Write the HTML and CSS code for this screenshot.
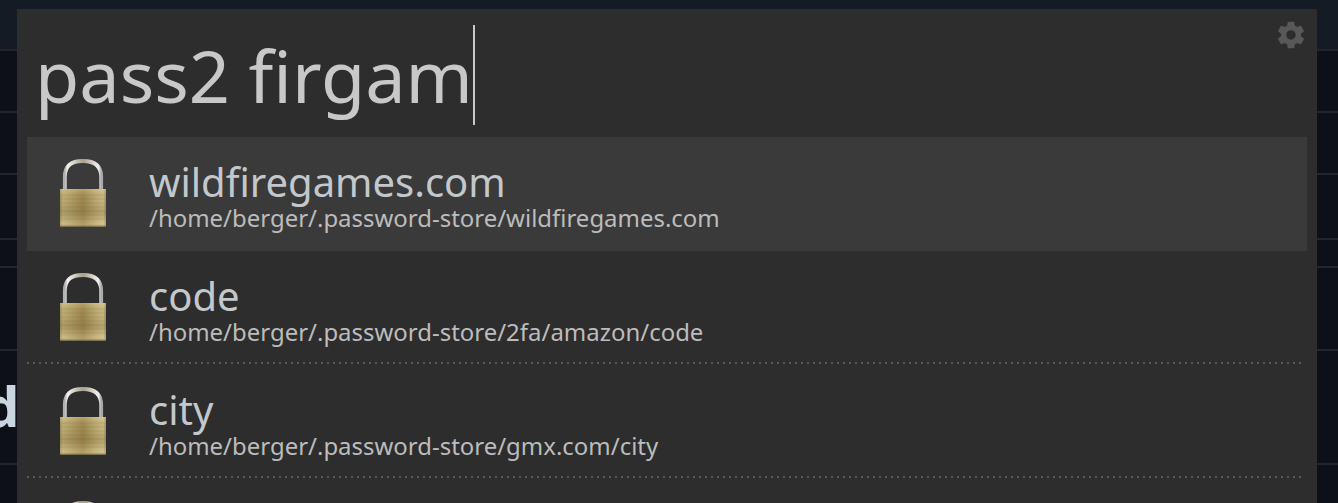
FILE: index.html
```html
<!DOCTYPE html>
<html lang="en">
  <head>
    <meta charset="UTF-8" />
    <meta name="viewport" content="width=device-width, initial-scale=1.0" />
    <title>Launcher</title>
    <link rel="stylesheet" href="styles.css">
  </head>
  <body>
    <svg class="defs" width="0" height="0" aria-hidden="true">
      <defs>
        <linearGradient id="brass" x1="0" y1="0" x2="1" y2="0">
          <stop offset="0" stop-color="#9a8c5e" />
          <stop offset="0.06" stop-color="#c0b07c" />
          <stop offset="0.28" stop-color="#ae9b63" />
          <stop offset="0.5" stop-color="#9c864e" />
          <stop offset="0.78" stop-color="#bcab76" />
          <stop offset="0.94" stop-color="#cbbb88" />
          <stop offset="1" stop-color="#9a8c60" />
        </linearGradient>
        <linearGradient id="brass-shade" x1="0" y1="0" x2="0" y2="1">
          <stop offset="0" stop-color="#f4e6b0" stop-opacity="0.3" />
          <stop offset="0.3" stop-color="#8a7434" stop-opacity="0.05" />
          <stop offset="0.6" stop-color="#6b5a24" stop-opacity="0.25" />
          <stop offset="0.92" stop-color="#efe0ac" stop-opacity="0.25" />
          <stop offset="1" stop-color="#4a4230" stop-opacity="0.8" />
        </linearGradient>
        <linearGradient id="shackle" x1="0" y1="0" x2="1" y2="0">
          <stop offset="0" stop-color="#b0b0ae" />
          <stop offset="0.08" stop-color="#f4f4f2" />
          <stop offset="0.5" stop-color="#a89f8c" />
          <stop offset="0.92" stop-color="#f2f2f0" />
          <stop offset="1" stop-color="#a8a8a8" />
        </linearGradient>
        <symbol id="padlock" viewBox="0 0 48 68">
          <path d="M5.8 31V18C5.8 6 13 2 24 2S42.2 6 42.2 18v13" fill="none" stroke="url(#shackle)" stroke-width="3.8" />
          <rect x="1" y="30" width="46" height="38" fill="url(#brass)" />
          <rect x="1" y="30" width="46" height="38" fill="url(#brass-shade)" />
          <path d="M2 36h44M2 40h44M2 44h44M2 48h44M2 52h44M2 56h44M2 60h44" stroke="#7f6c36" stroke-opacity="0.18" />
        </symbol>
      </defs>
    </svg>

    <div class="backdrop">
      <div class="row row-head"></div>
      <div class="row row-a"></div>
      <div class="row row-a"></div>
      <div class="row row-b"></div>
      <div class="row row-c"></div>
      <div class="row row-d"></div>
      <div class="row row-e"><h2>d</h2></div>
    </div>

    <div class="launcher">
      <div class="query">
        <span class="query-text">pass2 firgam</span><span class="caret"></span>
      </div>
      <svg class="gear" viewBox="0 0 24 24" aria-hidden="true">
        <path d="M19.43 12.98c.04-.32.07-.64.07-.98s-.03-.66-.07-.98l2.11-1.65c.19-.15.24-.42.12-.64l-2-3.46c-.12-.22-.39-.3-.61-.22l-2.49 1c-.52-.4-1.08-.73-1.69-.98l-.38-2.65C14.46 2.18 14.25 2 14 2h-4c-.25 0-.46.18-.49.42l-.38 2.65c-.61.25-1.17.59-1.69.98l-2.49-1c-.23-.09-.49 0-.61.22l-2 3.46c-.13.22-.07.49.12.64l2.11 1.65c-.04.32-.07.65-.07.98s.03.66.07.98l-2.11 1.65c-.19.15-.24.42-.12.64l2 3.46c.12.22.39.3.61.22l2.49-1c.52.4 1.08.73 1.69.98l.38 2.65c.03.24.24.42.49.42h4c.25 0 .46-.18.49-.42l.38-2.65c.61-.25 1.17-.59 1.69-.98l2.49 1c.23.09.49 0 .61-.22l2-3.46c.12-.22.07-.49-.12-.64l-2.11-1.65zM12 15.5c-1.93 0-3.5-1.57-3.5-3.5s1.57-3.5 3.5-3.5 3.5 1.57 3.5 3.5-1.57 3.5-3.5 3.5z" />
      </svg>
      <ul class="results">
        <li class="result selected">
          <svg class="result-icon"><use href="#padlock" /></svg>
          <div class="result-text">
            <div class="result-name">wildfiregames.com</div>
            <div class="result-path">/home/berger/.password-store/wildfiregames.com</div>
          </div>
        </li>
        <li class="result">
          <svg class="result-icon"><use href="#padlock" /></svg>
          <div class="result-text">
            <div class="result-name">code</div>
            <div class="result-path">/home/berger/.password-store/2fa/amazon/code</div>
          </div>
        </li>
        <li class="result">
          <svg class="result-icon"><use href="#padlock" /></svg>
          <div class="result-text">
            <div class="result-name">city</div>
            <div class="result-path">/home/berger/.password-store/gmx.com/city</div>
          </div>
        </li>
        <li class="result">
          <svg class="result-icon"><use href="#padlock" /></svg>
        </li>
      </ul>
    </div>
  </body>
</html>
```

FILE: styles.css
```css
* {
  margin: 0;
  padding: 0;
  box-sizing: border-box;
}

html,
body {
  height: 100%;
  overflow: hidden;
}

body {
  font-family: "Noto Sans", sans-serif;
  background: #0d1117;
  position: relative;
}

.defs {
  position: absolute;
}

.row {
  border-bottom: 2px solid #21262d;
  overflow: hidden;
}

.row-head {
  height: 51px;
  background: #151b25;
}

.row-a {
  height: 62px;
}

.row-b {
  height: 65px;
}

.row-c {
  height: 28px;
}

.row-d {
  height: 83px;
}

.row-e {
  height: 114px;
}

.row h2 {
  font-size: 56px;
  font-weight: 700;
  line-height: 64px;
  color: #c9d5df;
  margin: 22px 0 0 -16px;
  white-space: nowrap;
}

/* floats over the page behind it */
.launcher {
  position: absolute;
  top: 9px;
  left: 17px;
  width: 1300px;
  bottom: 0;
  background: #2d2d2d;
  overflow: hidden;
}

.query {
  height: 128px;
  padding: 16px 0 0 18px;
  display: flex;
  align-items: flex-start;
  color: #c8c8c8;
  font-size: 72px;
  line-height: 100px;
}

.query-text {
  white-space: pre;
}

.caret {
  width: 2px;
  height: 100px;
  background: #c8c8c8;
}

.gear {
  position: absolute;
  top: 10px;
  right: 10px;
  width: 32px;
  height: 32px;
  fill: #585858;
}

.results {
  list-style: none;
  margin: 0 10px;
}

.result {
  height: 114px;
  display: flex;
  align-items: center;
  position: relative;
}

.result::after {
  content: "";
  position: absolute;
  left: 0;
  right: 5px;
  bottom: 1px;
  height: 2px;
  background: repeating-linear-gradient(to right, #5a5a5a 0 2px, transparent 2px 6px);
}

.result.selected {
  background: #3a3a3a;
}

.result.selected::after {
  display: none;
}

.result-icon {
  width: 48px;
  height: 68px;
  margin: 0 0 2px 32px;
  flex: none;
}

.result-text {
  margin: 4px 0 0 42px;
}

.result-name {
  font-size: 40px;
  line-height: 44px;
  color: #c2c8cc;
}

.result-path {
  font-size: 23.96px;
  line-height: 28px;
  color: #bcbcbc;
}
```
